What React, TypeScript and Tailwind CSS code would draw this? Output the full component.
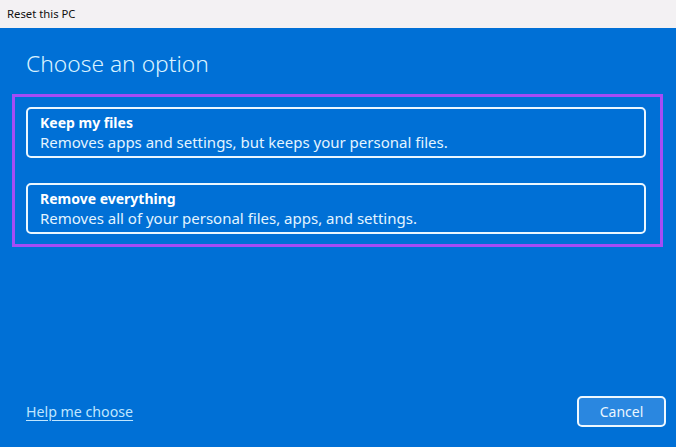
import React from "react";

export default function App() {
  const font = { fontFamily: '"Noto Sans", "Open Sans", sans-serif' };
  return (
    <div
      className="w-[676px] h-[447px] flex flex-col overflow-hidden font-['Noto_Sans',sans-serif]"
      style={font}
    >
      <div className="h-[28px] shrink-0 bg-[#f3f1f3] flex items-center px-[7px] text-[11.3px] text-[#111]">
        Reset this PC
      </div>
      <div className="flex-1 bg-[#0070d6] flex flex-col text-[#e8f6ff]">
        <h1 className="ml-[26px] mt-[21px] text-[22.8px] leading-[30px] font-light text-[#d9f2ff]">
          Choose an option
        </h1>
        <div className="ml-[12px] mt-[15px] w-[651px] h-[153px] border-[3px] border-[#a54cf6] pl-[11px] pt-[10px] flex flex-col gap-[25px]">
          <Option title="Keep my files" desc="Removes apps and settings, but keeps your personal files." />
          <Option title="Remove everything" desc="Removes all of your personal files, apps, and settings." />
        </div>
        <div className="flex-1" />
        <div className="flex items-center justify-between pl-[26px] pr-[10px] pb-[20px]">
          <a className="text-[14.2px] text-[#bfe6ff] underline underline-offset-[3px] decoration-1 cursor-pointer">
            Help me choose
          </a>
          <button className="w-[89px] h-[31px] rounded-[5px] border-2 border-[#eef8ff] bg-[#2a87e0] text-[14px] text-[#eaf6ff]">
            Cancel
          </button>
        </div>
      </div>
    </div>
  );
}

function Option({ title, desc }: { title: string; desc: string }) {
  return (
    <div className="w-[620px] h-[51px] rounded-[5px] border-2 border-[#eaf7ff] px-[12px] flex flex-col justify-center">
      <div className="text-[14px] leading-[19px] font-bold text-white">{title}</div>
      <div className="text-[15px] leading-[20px] text-[#e3f4ff]">{desc}</div>
    </div>
  );
}
